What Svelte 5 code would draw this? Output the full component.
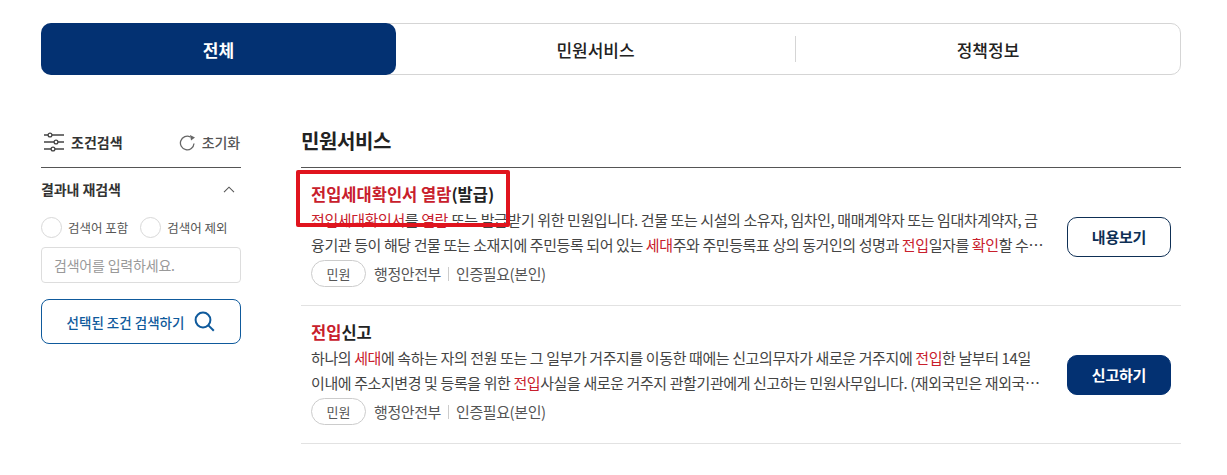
<script>
  const items = [
    {
      title: [['전입세대확인서 열람', true], ['(발급)', false]],
      desc: [['전입세대확인서', true], ['를 ', false], ['열람', true], [' 또는 발급받기 위한 민원입니다. 건물 또는 시설의 소유자, 임차인, 매매계약자 또는 임대차계약자, 금융기관 등이 해당 건물 또는 소재지에 주민등록 되어 있는 ', false], ['세대', true], ['주와 주민등록표 상의 동거인의 성명과 ', false], ['전입', true], ['일자를 ', false], ['확인', true], ['할 수 있습니다. 신청인은 관련 서류를 제출해야 합니다.', false]],
      action: '내용보기',
      solid: false
    },
    {
      title: [['전입', true], ['신고', false]],
      desc: [['하나의 ', false], ['세대', true], ['에 속하는 자의 전원 또는 그 일부가 거주지를 이동한 때에는 신고의무자가 새로운 거주지에 ', false], ['전입', true], ['한 날부터 14일 이내에 주소지변경 및 등록을 위한 ', false], ['전입', true], ['사실을 새로운 거주지 관할기관에게 신고하는 민원사무입니다. (재외국민은 재외국민 주민등록 신고 대상입니다.)', false]],
      action: '신고하기',
      solid: true
    }
  ];
</script>

<div class="page">
  <nav class="tabs">
    <button class="tab active">전체</button>
    <button class="tab middle">민원서비스</button>
    <span class="divider"></span>
    <button class="tab">정책정보</button>
  </nav>

  <div class="body">
    <aside class="side">
      <div class="side-head">
        <div class="cond">
          <svg width="20" height="20" viewBox="0 0 20 20" fill="none" stroke="#444" stroke-width="1.3">
            <path d="M0 3h4M8 3h12M0 10h10M14 10h6M0 17h7M11 17h9" />
            <circle cx="6" cy="3" r="1.9" />
            <circle cx="12" cy="10" r="1.9" />
            <circle cx="9" cy="17" r="1.9" />
          </svg>
          <span>조건검색</span>
        </div>
        <div class="reset">
          <svg width="17" height="17" viewBox="0 0 17 17" fill="none" stroke="#666" stroke-width="1.3">
            <path d="M15 9.5A6.8 6.8 0 1 1 11.4 3" />
            <path d="M11 1 L16 3.6 L12 6.6 Z" fill="#666" stroke="none" />
          </svg>
          <span>초기화</span>
        </div>
      </div>

      <div class="re-head">
        <span>결과내 재검색</span>
        <svg width="12" height="7" viewBox="0 0 12 7" fill="none" stroke="#555" stroke-width="1.1"><path d="M1 6.2 6 1.2l5 5" /></svg>
      </div>

      <div class="radios">
        <label class="radio"><i></i>검색어 포함</label>
        <label class="radio"><i></i>검색어 제외</label>
      </div>

      <input class="field" placeholder="검색어를 입력하세요." />

      <button class="search">
        <span>선택된 조건 검색하기</span>
        <svg width="21" height="21" viewBox="0 0 21 21" fill="none" stroke="#0f5a9c" stroke-width="2"><circle cx="9" cy="9" r="7.4" /><path d="m14.4 14.4 5.4 5.4" /></svg>
      </button>
    </aside>

    <main class="main">
      <h2>민원서비스</h2>
      <ul class="list">
        {#each items as item}
          <li class="item">
            <div class="info">
              <h3>{#each item.title as [t, hit]}<span class:hit>{t}</span>{/each}</h3>
              <p class="desc">{#each item.desc as [t, hit]}<span class:mark={hit}>{t}</span>{/each}</p>
              <div class="meta">
                <span class="chip">민원</span>
                <span class="org">행정안전부</span>
                <span class="sep"></span>
                <span class="org">인증필요(본인)</span>
              </div>
            </div>
            <button class="act" class:solid={item.solid}>{item.action}</button>
          </li>
        {/each}
      </ul>
      <div class="callout"></div>
    </main>
  </div>
</div>

<style>
  :global(body) {
    margin: 0;
    background: #fff;
    font-family: "Noto Sans CJK KR", "Noto Sans", sans-serif;
  }
  .page {
    width: 1140px;
    margin-left: 41px;
    padding-top: 23px;
    height: 452px;
    overflow: hidden;
  }
  button, input {
    font-family: inherit;
  }
  .tabs {
    display: flex;
    align-items: center;
    height: 52px;
    box-sizing: border-box;
    border: 1px solid #d5d5d5;
    border-radius: 10px;
    position: relative;
  }
  .tab {
    flex: 1;
    height: 52px;
    border: 0;
    background: none;
    font-size: 17px;
    font-weight: 500;
    color: #222;
    padding: 0;
  }
  .tab.middle {
    flex: 0 0 399px;
  }
  .tab.active {
    flex: 0 0 355px;
    margin: -1px 0 -1px -1px;
    background: #033172;
    color: #fff;
    font-weight: 700;
    border-radius: 10px;
  }
  .divider {
    width: 1px;
    height: 26px;
    background: #d5d5d5;
  }
  .body {
    display: flex;
    gap: 60px;
    margin-top: 42px;
  }
  .side {
    width: 200px;
    flex: none;
  }
  .side-head {
    display: flex;
    align-items: center;
    justify-content: space-between;
    height: 51px;
    border-bottom: 1px solid #555;
    padding-left: 3px;
    box-sizing: border-box;
  }
  .cond, .reset {
    display: flex;
    align-items: center;
  }
  .cond { gap: 7px; font-size: 14px; font-weight: 700; color: #333; }
  .reset { gap: 6px; font-size: 14px; font-weight: 500; color: #555; letter-spacing: -0.1px; margin-right: 1px; }
  .re-head {
    display: flex;
    justify-content: space-between;
    align-items: center;
    margin-top: 11px;
    padding-right: 6px;
    height: 20px;
    font-size: 14px;
    font-weight: 700;
    color: #333;
    letter-spacing: -0.1px;
  }
  .radios {
    display: flex;
    gap: 12px;
    margin-top: 18px;
  }
  .radio {
    display: flex;
    align-items: center;
    gap: 6px;
    font-size: 12.5px;
    color: #555;
  }
  .radio i {
    width: 19px;
    height: 19px;
    border: 1px solid #d8d8d8;
    border-radius: 50%;
  }
  .field {
    display: block;
    box-sizing: border-box;
    width: 200px;
    height: 36px;
    margin-top: 9px;
    padding: 0 12px;
    border: 1px solid #ddd;
    border-radius: 4px;
    font-size: 14px;
    letter-spacing: -0.2px;
    outline: none;
  }
  .field::placeholder { color: #999; }
  .search {
    display: flex;
    align-items: center;
    justify-content: center;
    gap: 10px;
    box-sizing: border-box;
    width: 200px;
    height: 45px;
    margin-top: 16px;
    padding: 0;
    background: #fff;
    border: 1px solid #0f5a9c;
    border-radius: 8px;
    color: #0f5a9c;
    font-size: 13.5px;
    font-weight: 500;
  }
  .main {
    width: 880px;
    position: relative;
  }
  h2 {
    margin: 0;
    padding-top: 9px;
    box-sizing: border-box;
    border-bottom: 1px solid #555;
    height: 51px;
    font-size: 20px;
    line-height: 30px;
    font-weight: 700;
    color: #222;
    letter-spacing: -0.4px;
  }
  .list {
    list-style: none;
    margin: 0;
    padding: 0;
  }
  .item {
    display: flex;
    justify-content: space-between;
    align-items: center;
    height: 138px;
    box-sizing: border-box;
    padding: 0 10px;
    border-bottom: 1px solid #e2e2e2;
  }
  .info {
    width: 733px;
    margin-bottom: 4px;
  }
  h3 {
    margin: 0;
    font-size: 16.5px;
    line-height: 24px;
    font-weight: 700;
    color: #222;
  }
  .hit { color: #c8202c; }
  .desc {
    margin: 1px 0 0;
    font-size: 15px;
    line-height: 25px;
    color: #444;
    letter-spacing: -0.4px;
    display: -webkit-box;
    -webkit-box-orient: vertical;
    -webkit-line-clamp: 2;
    line-clamp: 2;
    overflow: hidden;
  }
  .mark { color: #c8202c; }
  .meta {
    display: flex;
    align-items: center;
    margin-top: 3px;
    font-size: 15px;
    letter-spacing: -0.4px;
    color: #555;
  }
  .chip {
    box-sizing: border-box;
    width: 55px;
    height: 27px;
    line-height: 25px;
    text-align: center;
    font-size: 13px;
    letter-spacing: 0;
    border: 1px solid #ccc;
    border-radius: 14px;
    margin-right: 8px;
  }
  .sep {
    width: 1px;
    height: 14px;
    background: #ccc;
    margin: 0 7px;
  }
  .act {
    flex: none;
    width: 104px;
    height: 40px;
    border: 1px solid #0e2f55;
    border-radius: 10px;
    background: #fff;
    color: #0e2f55;
    font-size: 15px;
    letter-spacing: -0.2px;
    font-weight: 700;
    padding: 0;
  }
  .act.solid {
    background: #033172;
    border-color: #033172;
    color: #fff;
  }
  .callout {
    position: absolute;
    left: -5px;
    top: 53px;
    width: 214px;
    height: 57px;
    box-sizing: border-box;
    border: 4px solid #e0141e;
    border-radius: 2px;
    pointer-events: none;
  }
</style>
